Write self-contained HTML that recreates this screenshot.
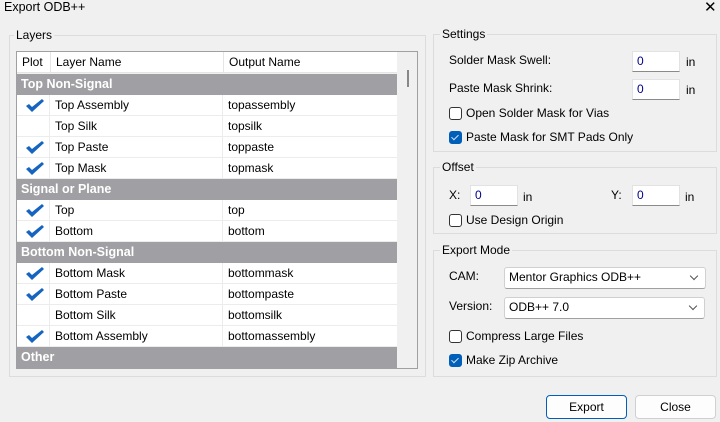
<!DOCTYPE html>
<html><head><style>
*{box-sizing:border-box;margin:0;padding:0}
body{width:720px;height:422px;background:#f0f0f0;font-family:"Liberation Sans",sans-serif;font-size:12px;color:#000;position:relative;overflow:hidden}
.a{position:absolute;white-space:nowrap}
.gb{position:absolute;border:1px solid #dcdcdc}
.lg{position:absolute;background:#f0f0f0;padding:0 2px;font-size:12px}
.inp{position:absolute;background:#fff;border:1px solid #e2e2e2;border-bottom:1px solid #8a8a8a;color:#00008b;padding-left:4px;line-height:19px}
.cb{position:absolute;width:13px;height:13px;border:1px solid #333;border-radius:3px;background:#fff}
.cb.on{background:#005fb8;border-color:#005fb8}
.cb.on:after{content:"";position:absolute;left:3px;top:1px;width:3px;height:6px;border:solid #cfe2f7;border-width:0 1px 1px 0;transform:rotate(45deg)}
.combo{position:absolute;background:#fff;border:1px solid #d0d0d0;border-bottom-color:#a0a0a0;border-radius:3px;padding-left:4px;line-height:19px}
.combo:after{content:"";position:absolute;right:8px;top:5px;width:5px;height:5px;border:solid #555;border-width:0 1px 1px 0;transform:rotate(45deg)}
.row{position:absolute;left:0;width:380px;height:21px;line-height:20px;background:#fff;border-bottom:1px solid #ececec}
.row .c1{position:absolute;left:0;width:33px;height:20px;border-right:1px solid #ececec}
.row .c2{position:absolute;left:33px;width:173px;height:20px;border-right:1px solid #ececec;padding-left:5px}
.row .c3{position:absolute;left:206px;padding-left:5px}
.grp{position:absolute;left:0;width:380px;height:21px;line-height:20px;background:#a0a0a4;color:#fff;font-weight:bold;padding-left:4px;font-size:12.5px}
.chk{position:absolute;left:8px;top:3px}
.btn{position:absolute;height:24px;background:#fdfdfd;border:1px solid #d0d0d0;border-radius:4px;text-align:center;line-height:22px}
</style></head><body>
<div class="a" style="left:4px;top:0;font-size:12.5px">Export ODB++</div>
<div class="a" style="left:704px;top:-2px;font-size:15px">✕</div>

<div class="gb" style="left:9px;top:35px;width:417px;height:342px"></div>
<div class="lg" style="left:14px;top:28px">Layers</div>
<div class="a" style="left:16px;top:51px;width:402px;height:318px;border:1px solid #a0a0a0;background:#f0f0f0">
 <div class="a" style="left:0;top:0;width:380px;height:21px;background:#fff;border-bottom:1px solid #e5e5e5;line-height:21px">
  <span class="a" style="left:5px">Plot</span>
  <span class="a" style="left:33px;top:0;height:21px;border-left:1px solid #e5e5e5;padding-left:5px">Layer Name</span>
  <span class="a" style="left:206px;top:0;height:21px;border-left:1px solid #e5e5e5;padding-left:5px">Output Name</span>
 </div>
 <div class="a" style="left:390px;top:18px;width:2px;height:17px;background:#888"></div>
 <div style="position:absolute;left:0;top:22px">
  <div class="grp" style="top:0">Top Non-Signal</div>
  <div class="row" style="top:21px"><div class="c1"><svg class="chk" width="20" height="15"><path d="M1 8 L4 6 L7 9 L17 1 L19 3 L7 14 Z" fill="#1565c0"/></svg></div><div class="c2">Top Assembly</div><div class="c3">topassembly</div></div>
  <div class="row" style="top:42px"><div class="c1"></div><div class="c2">Top Silk</div><div class="c3">topsilk</div></div>
  <div class="row" style="top:63px"><div class="c1"><svg class="chk" width="20" height="15"><path d="M1 8 L4 6 L7 9 L17 1 L19 3 L7 14 Z" fill="#1565c0"/></svg></div><div class="c2">Top Paste</div><div class="c3">toppaste</div></div>
  <div class="row" style="top:84px"><div class="c1"><svg class="chk" width="20" height="15"><path d="M1 8 L4 6 L7 9 L17 1 L19 3 L7 14 Z" fill="#1565c0"/></svg></div><div class="c2">Top Mask</div><div class="c3">topmask</div></div>
  <div class="grp" style="top:105px">Signal or Plane</div>
  <div class="row" style="top:126px"><div class="c1"><svg class="chk" width="20" height="15"><path d="M1 8 L4 6 L7 9 L17 1 L19 3 L7 14 Z" fill="#1565c0"/></svg></div><div class="c2">Top</div><div class="c3">top</div></div>
  <div class="row" style="top:147px"><div class="c1"><svg class="chk" width="20" height="15"><path d="M1 8 L4 6 L7 9 L17 1 L19 3 L7 14 Z" fill="#1565c0"/></svg></div><div class="c2">Bottom</div><div class="c3">bottom</div></div>
  <div class="grp" style="top:168px">Bottom Non-Signal</div>
  <div class="row" style="top:189px"><div class="c1"><svg class="chk" width="20" height="15"><path d="M1 8 L4 6 L7 9 L17 1 L19 3 L7 14 Z" fill="#1565c0"/></svg></div><div class="c2">Bottom Mask</div><div class="c3">bottommask</div></div>
  <div class="row" style="top:210px"><div class="c1"><svg class="chk" width="20" height="15"><path d="M1 8 L4 6 L7 9 L17 1 L19 3 L7 14 Z" fill="#1565c0"/></svg></div><div class="c2">Bottom Paste</div><div class="c3">bottompaste</div></div>
  <div class="row" style="top:231px"><div class="c1"></div><div class="c2">Bottom Silk</div><div class="c3">bottomsilk</div></div>
  <div class="row" style="top:252px"><div class="c1"><svg class="chk" width="20" height="15"><path d="M1 8 L4 6 L7 9 L17 1 L19 3 L7 14 Z" fill="#1565c0"/></svg></div><div class="c2">Bottom Assembly</div><div class="c3">bottomassembly</div></div>
  <div class="grp" style="top:273px">Other</div>
 </div>
</div>

<div class="gb" style="left:433px;top:34px;width:284px;height:118px"></div>
<div class="lg" style="left:440px;top:27px">Settings</div>
<div class="a" style="left:449px;top:53px">Solder Mask Swell:</div>
<div class="inp" style="left:632px;top:51px;width:48px;height:21px">0</div>
<div class="a" style="left:686px;top:55px">in</div>
<div class="a" style="left:449px;top:81px">Paste Mask Shrink:</div>
<div class="inp" style="left:632px;top:79px;width:48px;height:21px">0</div>
<div class="a" style="left:686px;top:83px">in</div>
<div class="cb" style="left:449px;top:107px"></div><div class="a" style="left:466px;top:106px">Open Solder Mask for Vias</div>
<div class="cb on" style="left:449px;top:131px"></div><div class="a" style="left:466px;top:130px">Paste Mask for SMT Pads Only</div>

<div class="gb" style="left:433px;top:167px;width:284px;height:67px"></div>
<div class="lg" style="left:440px;top:160px">Offset</div>
<div class="a" style="left:449px;top:188px">X:</div>
<div class="inp" style="left:470px;top:185px;width:48px;height:21px">0</div>
<div class="a" style="left:523px;top:190px">in</div>
<div class="a" style="left:611px;top:188px">Y:</div>
<div class="inp" style="left:632px;top:185px;width:48px;height:21px">0</div>
<div class="a" style="left:685px;top:190px">in</div>
<div class="cb" style="left:449px;top:214px"></div><div class="a" style="left:466px;top:213px">Use Design Origin</div>

<div class="gb" style="left:433px;top:250px;width:284px;height:127px"></div>
<div class="lg" style="left:440px;top:243px">Export Mode</div>
<div class="a" style="left:449px;top:269px">CAM:</div>
<div class="combo" style="left:504px;top:267px;width:202px;height:22px">Mentor Graphics ODB++</div>
<div class="a" style="left:449px;top:299px">Version:</div>
<div class="combo" style="left:504px;top:297px;width:201px;height:22px">ODB++ 7.0</div>
<div class="cb" style="left:449px;top:330px"></div><div class="a" style="left:466px;top:329px">Compress Large Files</div>
<div class="cb on" style="left:449px;top:354px"></div><div class="a" style="left:466px;top:353px">Make Zip Archive</div>

<div class="btn" style="left:546px;top:395px;width:81px;border:1px solid #005fb8">Export</div>
<div class="btn" style="left:635px;top:395px;width:81px">Close</div>
</body></html>
